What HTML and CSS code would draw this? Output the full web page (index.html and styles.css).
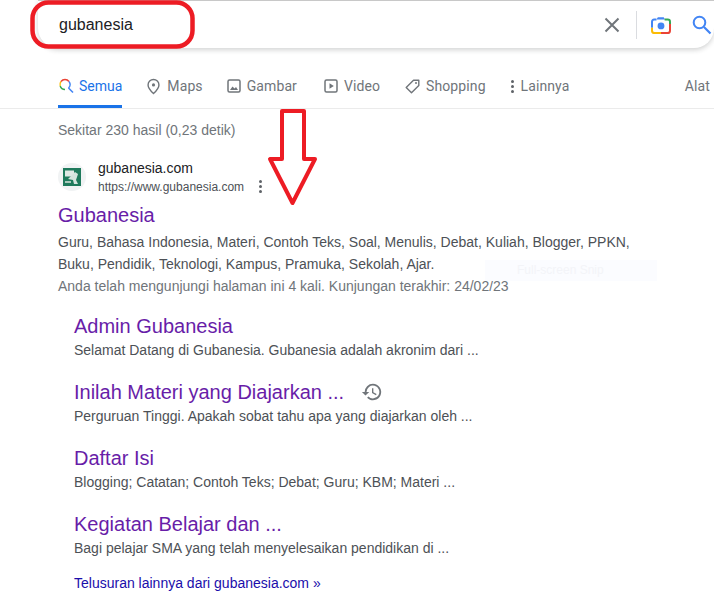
FILE: index.html
```html
<!DOCTYPE html>
<html lang="id">
<head>
    <meta charset="UTF-8">
    <meta name="viewport" content="width=device-width, initial-scale=1.0">
    <title>gubanesia</title>
    <link rel="stylesheet" href="styles.css">
</head>
<body>
    <!-- Search bar -->
    <div class="search-bar">
        <span class="query">gubanesia</span>
        <svg class="icon-clear" width="16" height="16" viewBox="0 0 16 16"><path d="M1.500 1.500 14.500 14.500M14.500 1.500 1.500 14.500" stroke="#70757a" stroke-width="2" fill="none"/></svg>
        <span class="divider"></span>
        <svg class="icon-lens" width="20" height="18" viewBox="0 0 22 20">
            <path d="M1 13V6.500Q1 4 3.500 4H6" stroke="#4285f4" stroke-width="2.200" fill="none"/>
            <path d="M6 4 7.500 1.500H14L15.500 4Z" fill="#4285f4"/>
            <path d="M15 4H18.500Q21 4 21 6.500V9" stroke="#34a853" stroke-width="2.200" fill="none"/>
            <path d="M21 9V16Q21 19 18 19H11" stroke="#ea4335" stroke-width="2.200" fill="none"/>
            <path d="M11 19H4Q1 19 1 16V13" stroke="#fbbc05" stroke-width="2.200" fill="none"/>
            <circle cx="11" cy="11" r="3.800" fill="#4285f4"/>
        </svg>
        <svg class="icon-search" width="20" height="20" viewBox="0 0 20 20"><circle cx="7.500" cy="7.500" r="5.800" stroke="#4285f4" stroke-width="2" fill="none"/><path d="M12 12 18.500 18.500" stroke="#4285f4" stroke-width="2.200"/></svg>
    </div>

    <!-- Tabs -->
    <div class="tabs">
        <a class="tab active">
            <svg width="16" height="16" viewBox="0 0 16 16">
                <path d="M2.200 8A5 5 0 0 1 3 3.500" stroke="#fbbc05" stroke-width="1.400" fill="none"/>
                <path d="M3 3.500A5 5 0 0 1 11 3.500" stroke="#ea4335" stroke-width="1.400" fill="none"/>
                <path d="M11 3.500A5 5 0 0 1 10.500 10" stroke="#4285f4" stroke-width="1.400" fill="none"/>
                <path d="M2.200 8A5 5 0 0 0 7 11.500" stroke="#34a853" stroke-width="1.400" fill="none"/>
                <path d="M10.500 10 15 14.500" stroke="#4285f4" stroke-width="1.600"/>
            </svg>
            Semua
        </a>
        <a class="tab maps">
            <svg width="15" height="17" viewBox="0 0 16 18"><path d="M8 1.500A5.800 5.800 0 0 0 2.200 7.300C2.200 11 8 16.500 8 16.500S13.800 11 13.800 7.300A5.800 5.800 0 0 0 8 1.500Z" stroke="#70757a" stroke-width="1.500" fill="none"/><circle cx="8" cy="7.300" r="1.700" fill="#70757a"/></svg>
            Maps
        </a>
        <a class="tab images">
            <svg width="14" height="14" viewBox="0 0 14 14"><rect x="1" y="1" width="12" height="12" rx="1.500" stroke="#70757a" stroke-width="1.500" fill="none"/><path d="M3 11 5.500 7.500 7.500 9.500 9 8 11 11Z" fill="#70757a"/></svg>
            Gambar
        </a>
        <a class="tab">
            <svg width="14" height="14" viewBox="0 0 14 14"><rect x="1" y="1" width="12" height="12" rx="1.500" stroke="#70757a" stroke-width="1.500" fill="none"/><path d="M5.500 4.200V9.800L9.800 7Z" fill="#70757a"/></svg>
            Video
        </a>
        <a class="tab">
            <svg width="15" height="15" viewBox="0 0 15 15"><path d="M8.500 1.200H13.800V6.500L6.500 13.800 1.200 8.500Z" stroke="#70757a" stroke-width="1.400" fill="none" stroke-linejoin="round"/><circle cx="11" cy="4" r="1" fill="#70757a"/></svg>
            Shopping
        </a>
        <a class="tab more">
            <span class="dots"><i></i><i></i><i></i></span>
            Lainnya
        </a>
        <a class="tab tools">Alat</a>
    </div>

    <div class="content">
        <div class="stats">Sekitar 230 hasil (0,23 detik)</div>

        <!-- Main result -->
        <div class="site">
            <div class="favicon">
                <svg width="18" height="18" viewBox="0 0 18 18"><rect width="18" height="18" fill="#1f7a5c"/><rect x="2" y="2.500" width="9" height="6" fill="#dfe8e4"/><path d="M12 4 15 6 13 12 15 16H11L10 12 5 11Z" fill="#d5e3dd"/><rect x="2" y="13" width="6" height="2" fill="#a9c8bb"/></svg>
            </div>
            <div class="site-text">
                <div class="site-name">gubanesia.com</div>
                <div class="site-url">https://www.gubanesia.com
                    <span class="dots"><i></i><i></i><i></i></span>
                </div>
            </div>
        </div>
        <a class="title">Gubanesia</a>
        <p class="desc">Guru, Bahasa Indonesia, Materi, Contoh Teks, Soal, Menulis, Debat, Kuliah, Blogger, PPKN,<br>Buku, Pendidik, Teknologi, Kampus, Pramuka, Sekolah, Ajar.</p>
        <p class="visited">Anda telah mengunjungi halaman ini 4 kali. Kunjungan terakhir: 24/02/23</p>

        <!-- Sitelinks -->
        <div class="sitelinks">
            <div class="sitelink">
                <a class="title">Admin Gubanesia</a>
                <p>Selamat Datang di Gubanesia. Gubanesia adalah akronim dari ...</p>
            </div>
            <div class="sitelink">
                <a class="title">Inilah Materi yang Diajarkan ...
                    <svg class="icon-history" width="22" height="22" viewBox="0 0 24 24"><path d="M13 3a9 9 0 0 0-9 9H1l3.900 3.900L9 12H6a7 7 0 1 1 2.050 4.950L6.640 18.360A9 9 0 1 0 13 3Z" fill="#70757a"/><path d="M12 8v5l4.300 2.500.7-1.200-3.500-2.100V8Z" fill="#70757a"/></svg>
                </a>
                <p>Perguruan Tinggi. Apakah sobat tahu apa yang diajarkan oleh ...</p>
            </div>
            <div class="sitelink">
                <a class="title">Daftar Isi</a>
                <p>Blogging; Catatan; Contoh Teks; Debat; Guru; KBM; Materi ...</p>
            </div>
            <div class="sitelink">
                <a class="title">Kegiatan Belajar dan ...</a>
                <p>Bagi pelajar SMA yang telah menyelesaikan pendidikan di ...</p>
            </div>
            <a class="more-results">Telusuran lainnya dari gubanesia.com »</a>
        </div>
    </div>

    <!-- Faint snipping tool label left in the capture -->
    <div class="snip">Full-screen Snip</div>

    <!-- Red annotations drawn over the screenshot -->
    <svg class="mark-oval" width="165" height="49" viewBox="0 0 165 49"><rect x="2.500" y="2.500" width="160" height="44" rx="16" stroke="#ed1c24" stroke-width="4.500" fill="none"/></svg>
    <svg class="mark-arrow" width="54" height="100" viewBox="0 0 54 100"><path d="M16 2H38V50H49L26.500 94 4 50H16Z" stroke="#ed1c24" stroke-width="4" fill="none" stroke-linejoin="round"/></svg>
</body>
</html>
```

FILE: styles.css
```css
html, body {
    margin: 0;
    height: 602px;
    overflow: hidden;
    background-color: #fff;
}

body {
    position: relative;
    font-family: "Liberation Sans", Arial, sans-serif;
    color: #4d5156;
}

p {
    margin: 0;
}

/* Search bar */
.search-bar {
    display: flex;
    align-items: center;
    box-sizing: border-box;
    height: 48px;
    margin-left: 38px;
    padding-left: 21px;
    border-top: 1px solid #c8c8c8;
    border-radius: 0 0 20px 20px;
    box-shadow: 0 2px 5px rgba(32, 33, 36, 0.2);
    background-color: #fff;
}

.query {
    flex: 1;
    font-size: 16px;
    color: #202124;
}

.icon-clear {
    margin-right: 16px;
}

.divider {
    width: 1px;
    height: 28px;
    margin-right: 14px;
    background-color: #dadce0;
}

.icon-lens {
    margin-right: 21px;
}

.icon-search {
    margin-right: 2px;
}

/* Tabs */
.tabs {
    display: flex;
    box-sizing: border-box;
    height: 61px;
    padding: 23px 0 0 58px;
    border-bottom: 1px solid #ebebeb;
    font-family: Roboto, Arial, sans-serif;
    font-size: 14px;
    letter-spacing: 0.1px;
    color: #70757a;
}

.tab {
    display: flex;
    align-items: center;
    gap: 6px;
    height: 30px;
    margin-right: 25px;
    padding-bottom: 7px;
}

.tab.active {
    gap: 5px;
    margin-right: 24px;
    padding-bottom: 4px;
    border-bottom: 3px solid #1a73e8;
    letter-spacing: 0;
    color: #1a73e8;
}

.tab.maps {
    margin-right: 24px;
}

.tab.images {
    margin-right: 27px;
}

.tab.tools {
    margin-left: auto;
    margin-right: 4px;
}

.dots {
    display: inline-flex;
    flex-direction: column;
    gap: 2px;
    width: 4px;
    align-items: center;
}

.dots i {
    width: 3px;
    height: 3px;
    border-radius: 50%;
    background-color: #5f6368;
}

/* Results */
.content {
    padding: 12px 0 0 58px;
}

.stats {
    height: 18px;
    font-size: 14px;
    line-height: 18px;
    color: #70757a;
}

.site {
    display: flex;
    align-items: center;
    gap: 12px;
    margin-top: 22px;
    height: 32px;
}

.favicon {
    display: flex;
    align-items: center;
    justify-content: center;
    width: 28px;
    height: 28px;
    border-radius: 50%;
    background-color: #f1f3f4;
}

.site-name {
    font-size: 14px;
    line-height: 18px;
    color: #202124;
}

.site-url {
    display: flex;
    align-items: center;
    gap: 14px;
    margin-top: 1px;
    font-size: 12px;
    line-height: 18px;
    color: #4d5156;
}

.title {
    display: block;
    font-size: 20px;
    line-height: 26px;
    color: #681da8;
}

.content > .title {
    margin-top: 9px;
}

.desc {
    margin-top: 3px;
    font-size: 14px;
    line-height: 22px;
}

.visited {
    font-size: 14px;
    line-height: 22px;
    color: #70757a;
}

/* Sitelinks */
.sitelinks {
    padding: 16px 0 0 16px;
}

.sitelink {
    height: 66px;
}

.sitelink .title {
    display: flex;
    align-items: center;
    gap: 6px;
}

.sitelink p {
    margin-top: 1px;
    font-size: 14px;
    line-height: 20px;
}

.more-results {
    display: block;
    margin-top: -4px;
    font-size: 14px;
    line-height: 20px;
    color: #1a0dab;
}

.icon-history {
    margin-left: 11px;
}

/* Overlays */
.snip {
    position: absolute;
    left: 485px;
    top: 260px;
    box-sizing: border-box;
    width: 172px;
    height: 21px;
    padding-left: 32px;
    background-color: #fbfcff;
    font-size: 12px;
    line-height: 21px;
    color: #f3f4f8;
}

.mark-oval {
    position: absolute;
    left: 30px;
    top: 0;
}

.mark-arrow {
    position: absolute;
    left: 266px;
    top: 109px;
}
```
